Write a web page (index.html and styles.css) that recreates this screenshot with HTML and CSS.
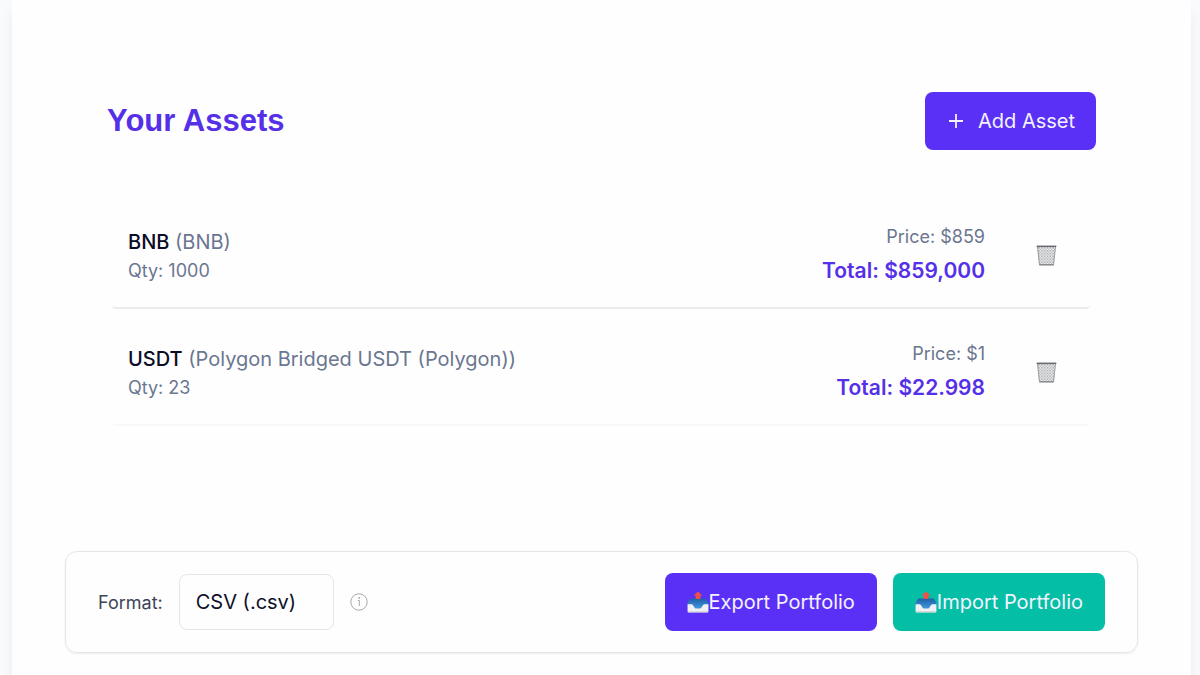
FILE: index.html
```html
<!DOCTYPE html>
<html lang="en">
<head>
<meta charset="utf-8">
<meta name="viewport" content="width=device-width, initial-scale=1">
<title>Your Assets</title>
<link rel="stylesheet" href="styles.css">
</head>
<body>
<svg class="defs" width="0" height="0" aria-hidden="true">
  <defs>
    <pattern id="mesh" width="3" height="3" patternUnits="userSpaceOnUse">
      <path d="M0 0L3 3M3 0L0 3" stroke="#85888d" stroke-width=".6"/>
    </pattern>
    <linearGradient id="tray-blue" x1="0" y1="0" x2="0" y2="1">
      <stop offset="0" stop-color="#1d5fa8"/>
      <stop offset="1" stop-color="#459be0"/>
    </linearGradient>
    <symbol id="trash" viewBox="0 0 22 22">
      <path d="M1.2 1.2H20.8L18.6 21H3.4Z" fill="#fafafa"/>
      <path d="M1.2 1.2H20.8L18.6 21H3.4Z" fill="url(#mesh)"/>
      <path d="M1.6 2L3.6 20.5M20.4 2L18.4 20.5" stroke="#8f9196" stroke-width=".9"/>
      <path d="M.7 1.4H21.3" stroke="#66696e" stroke-width="1.6"/>
      <path d="M3.4 20.8H18.6" stroke="#75787d" stroke-width="1.3"/>
    </symbol>
    <symbol id="tray" viewBox="0 0 22 22">
      <path d="M3.2 7.5H18.8L21.4 12V18H.6V12Z" fill="url(#tray-blue)"/>
      <path d="M.6 13.2H4.6C6.6 13.2 7 17.6 9.4 17.6H12.6C15 17.6 15.4 13.2 17.4 13.2H21.4V20.4Q21.4 21.4 20.4 21.4H1.6Q.6 21.4 .6 20.4Z" fill="#f1f1f3"/>
      <path d="M.9 20.8H21.1" stroke="#c9ccd3" stroke-width=".9"/>
      <path d="M11 .4L15.4 4.6H13.4V8H8.6V4.6H6.6Z" fill="#ee5148"/>
    </symbol>
  </defs>
</svg>
<main class="card">
  <section class="assets">
    <header class="assets-header">
      <h1 class="title">Your Assets</h1>
      <button type="button" class="btn btn-add">
        <svg class="plus" viewBox="0 0 16 16" aria-hidden="true"><path d="M8 1V15M1 8H15"/></svg>
        <span>Add Asset</span>
      </button>
    </header>
    <ul class="asset-list">
      <li class="asset">
        <div class="asset-info">
          <div class="asset-name"><strong>BNB</strong> (BNB)</div>
          <div class="asset-qty">Qty: 1000</div>
        </div>
        <div class="asset-value">
          <div class="asset-price">Price: $859</div>
          <div class="asset-total">Total: $859,000</div>
        </div>
        <button type="button" class="remove" aria-label="Remove BNB"><svg viewBox="0 0 22 22"><use href="#trash"/></svg></button>
      </li>
      <li class="asset">
        <div class="asset-info">
          <div class="asset-name"><strong>USDT</strong> (Polygon Bridged USDT (Polygon))</div>
          <div class="asset-qty">Qty: 23</div>
        </div>
        <div class="asset-value">
          <div class="asset-price">Price: $1</div>
          <div class="asset-total">Total: $22.998</div>
        </div>
        <button type="button" class="remove" aria-label="Remove USDT"><svg viewBox="0 0 22 22"><use href="#trash"/></svg></button>
      </li>
    </ul>
  </section>
  <section class="transfer">
    <label class="format-label" for="format">Format:</label>
    <select id="format" class="format">
      <option>CSV (.csv)</option>
    </select>
    <svg class="info" viewBox="0 0 18 18" role="img" aria-label="Format information">
      <circle cx="9" cy="9" r="8.2"/>
      <path d="M8 7.5H9.3V13"/>
      <circle class="info-dot" cx="9.1" cy="5" r=".9"/>
    </svg>
    <div class="actions">
      <button type="button" class="btn btn-export"><svg class="tray" viewBox="0 0 22 22" aria-hidden="true"><use href="#tray"/></svg>Export Portfolio</button>
      <button type="button" class="btn btn-import"><svg class="tray" viewBox="0 0 22 22" aria-hidden="true"><use href="#tray"/></svg>Import Portfolio</button>
    </div>
  </section>
</main>
</body>
</html>
```
FILE: styles.css
```css
* {
  box-sizing: border-box;
}

body {
  margin: 0;
  background: #f8fafb;
  color: #0f1029;
  font-family: Inter, "Liberation Sans", sans-serif;
  font-size: 20px;
}

.defs {
  position: absolute;
}

.card {
  min-height: 100vh;
  margin: 0 9px 0 12px;
  padding: 92px 53px 22px;
  background: #fefefe;
  box-shadow: 0 12px 12px rgba(15, 40, 40, 0.06);
}

.assets {
  padding: 0 42px;
}

.assets-header {
  display: flex;
  align-items: center;
  justify-content: space-between;
}

.title {
  margin: 0;
  color: #5530e8;
  font-family: "Liberation Sans", Arial, sans-serif;
  font-size: 31px;
  line-height: 40px;
}

.btn {
  display: flex;
  align-items: center;
  height: 58px;
  padding: 0 22px;
  border: 0;
  border-radius: 8px;
  color: #f4f2ff;
  font: inherit;
  white-space: nowrap;
}

.btn-add {
  gap: 12px;
  padding: 0 21px;
  background: #5b30f6;
}

.btn-export {
  background: #5b30f6;
}

.btn-import {
  background: #04bfa6;
}

.plus {
  width: 20px;
  height: 16px;
  fill: none;
  stroke: currentColor;
  stroke-width: 1.8;
}

.asset-list {
  display: grid;
  gap: 11px;
  margin: 53px 6px 0 5px;
  padding: 0;
  list-style: none;
}

.asset {
  display: flex;
  align-items: flex-end;
  padding: 20px 33px 20px 16px;
  border-bottom: 2px solid #e9ebed;
  border-radius: 4px;
}

.asset:last-child {
  border-bottom-color: #f7f8f8;
}

.asset-info {
  flex: 1;
}

.asset-name {
  color: #6b7690;
  line-height: 26px;
}

.asset-name strong {
  color: #0b0c26;
  font-weight: 500;
}

.asset-qty {
  color: #6b7690;
  font-size: 18px;
  line-height: 32px;
}

.asset-value {
  text-align: right;
}

.asset-price {
  margin-bottom: 4px;
  color: #6b7690;
  font-size: 18px;
  line-height: 28px;
}

.asset-total {
  color: #5530e8;
  font-size: 21px;
  font-weight: 600;
  line-height: 32px;
}

.remove {
  display: flex;
  align-self: center;
  margin-left: 51px;
  padding: 0;
  border: 0;
  background: none;
}

.remove svg {
  width: 21px;
  height: 21px;
}

.transfer {
  display: flex;
  align-items: center;
  gap: 16px;
  margin-top: 125px;
  padding: 21px 32px;
  border: 1px solid #e4e6e8;
  border-radius: 12px;
  box-shadow: 0 1px 2px rgba(0, 0, 0, 0.08);
}

.format-label {
  color: #3c4558;
  font-size: 18px;
}

.format {
  width: 155px;
  height: 56px;
  padding: 0 16px;
  border: 1px solid #e3e5e8;
  border-radius: 8px;
  background: #fefefe;
  color: #0f1029;
  font: inherit;
  appearance: none;
}

.info {
  width: 18px;
  height: 18px;
  fill: none;
  stroke: #a9a9a9;
  stroke-width: 1;
}

.info-dot {
  fill: #a9a9a9;
  stroke: none;
}

.actions {
  display: flex;
  gap: 16px;
  margin-left: auto;
}

.tray {
  width: 22px;
  height: 22px;
}
```
